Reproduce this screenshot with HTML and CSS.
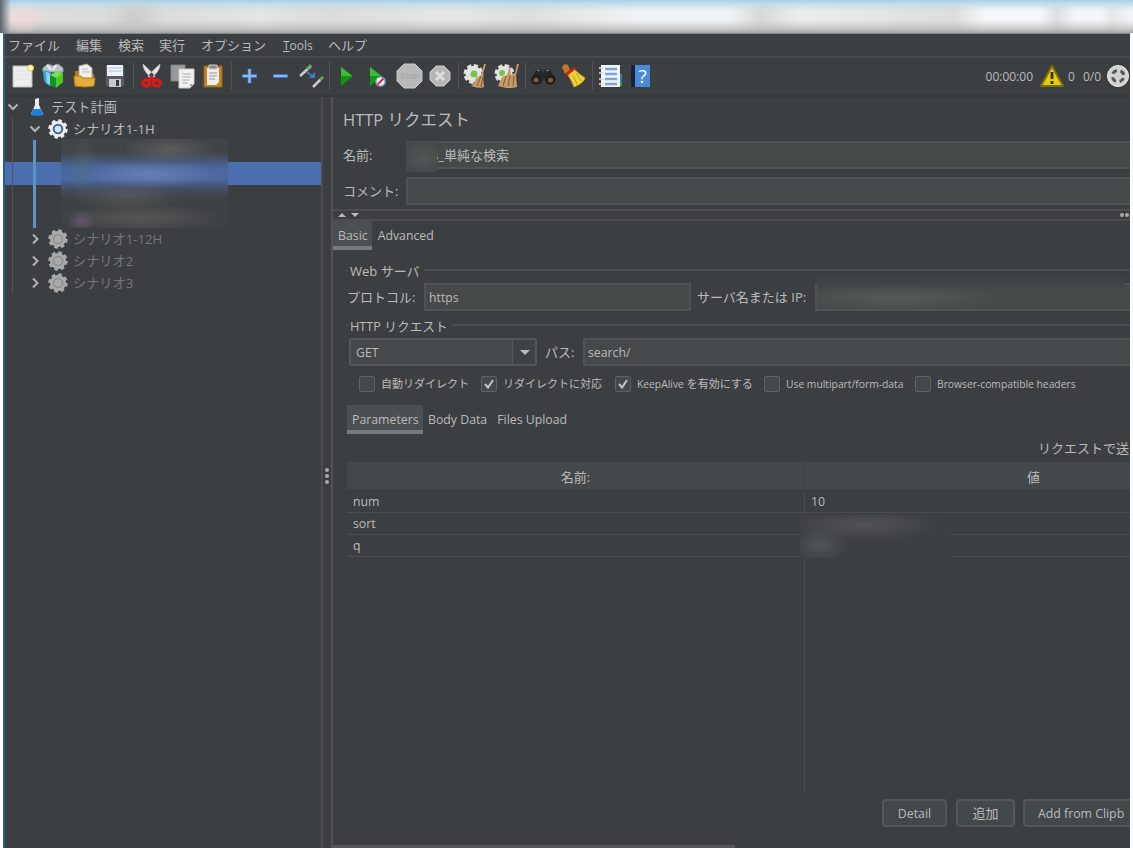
FILE: index.html
```html
<!DOCTYPE html>
<html lang="ja">
<head>
  <meta charset="UTF-8">
  <title>Apache JMeter</title>
  <link rel="stylesheet" href="styles.css">
</head>
<body>
  <div class="titlebar"></div>
  <div class="window">
    <nav class="menubar">
      <span class="m1">ファイル</span><span class="m2">編集</span><span class="m3">検索</span><span class="m4">実行</span><span class="m5">オプション</span><span class="m6"><u>T</u>ools</span><span class="m7">ヘルプ</span>
    </nav>

    <div class="toolbar">
      <svg class="icon" viewBox="0 0 31 28"><path d="M6 4h19v21H6z" fill="#eee" stroke="#bbb"/><path d="M9 9h13M9 13h13M9 17h13" stroke="#e2e2e2"/><circle cx="23.500" cy="6" r="3" fill="#fff6a0" stroke="#e6cf5a"/></svg>
      <svg class="icon" viewBox="0 0 31 28"><path d="M5 6l5-4 5 2 5-2 5 4v4H5z" fill="#b9c6ca" stroke="#8fa2a8"/><path d="M9 3l4 5M18 3l-3 5" stroke="#e9eef0" stroke-width="2"/><path d="M5 9q4-2 8 2v13q-6-2-7-6z" fill="#3ba7cf"/><path d="M8 10q3 0 4 3v10l-3-2z" fill="#8ed6ea"/><path d="M12 13l6 2v11l-6-3z" fill="#159329"/><path d="M18 15l7-4v9l-7 6z" fill="#49cf24"/><path d="M12 13l7-4 6 2-7 5z" fill="#78df54"/></svg>
      <svg class="icon" viewBox="0 0 31 28"><path d="M6 9h6l2 3h11v11H6z" fill="#b6780b"/><path d="M10 4l8-2 5 4v12H10z" fill="#f0f0f0" stroke="#aaa"/><path d="M13 7h6M13 10h8" stroke="#bbb"/><path d="M5 14h7l2 2h12l-1 8q-9 2-19 0z" fill="#e5ad38" stroke="#b67a13"/></svg>
      <svg class="icon" viewBox="0 0 31 28"><path d="M5 3h20v22H7l-2-2z" fill="#555b60" stroke="#30363a"/><path d="M7 3h16v11H7z" fill="#eff5fb"/><path d="M8 6h14M8 9h14" stroke="#a7c0d9"/><path d="M9 17h12v8H9z" fill="#c7c9ca"/><path d="M16 18h3v6h-3z" fill="#33383b"/></svg>
      <i class="sep"></i>
      <svg class="icon" viewBox="0 0 31 28"><path d="M7 2c0 6 4 10 10 15l2-3C15 9 11 6 7 2zM24 2c0 6-4 10-10 15l-2-3C16 9 20 6 24 2z" fill="#e8e8e8" stroke="#bbb" stroke-width=".6"/><g fill="none" stroke="#d01c1c" stroke-width="3.500"><ellipse cx="10.300" cy="21" rx="3.500" ry="3"/><ellipse cx="20.700" cy="21" rx="3.500" ry="3"/></g><path d="M13 18l2.500-3 2.500 3" fill="none" stroke="#d01c1c" stroke-width="3"/></svg>
      <svg class="icon" viewBox="0 0 31 28"><path d="M4 3h14v16H4z" fill="#999" stroke="#808080"/><path d="M12 7h15v15l-4 4H12z" fill="#f1f1f1" stroke="#ccc"/><path d="M15 12h9M15 15h9M15 18h7M15 21h6" stroke="#b0b0b0"/><path d="M23 26v-4h4" fill="#aaa"/></svg>
      <svg class="icon" viewBox="0 0 31 28"><rect x="6" y="4" width="18" height="21" fill="#c78422" stroke="#98600f"/><path d="M9 6h12v14l-3 3H9z" fill="#eee"/><path d="M11 3h8v4h-8z" fill="#888" stroke="#ccc"/><path d="M11 11h8M11 14h8M11 17h6" stroke="#999"/></svg>
      <i class="sep"></i>
      <svg class="icon" viewBox="0 0 31 28"><path d="M15.500 6.500v15M8 14h15" stroke="#315a9e" stroke-width="4.400"/><path d="M15.500 7v14M8.500 14h14" stroke="#8bb9f0" stroke-width="2.400"/></svg>
      <svg class="icon" viewBox="0 0 31 28"><path d="M8 14h15" stroke="#315a9e" stroke-width="4.400"/><path d="M8.500 14h14" stroke="#8bb9f0" stroke-width="2.400"/></svg>
      <svg class="icon" viewBox="0 0 31 28"><path d="M4 14L15 4" stroke="#ccc" stroke-width="2.500"/><path d="M11 7l4-4M23 19l4-4" stroke="#6ba75e" stroke-width="2.500"/><path d="M17 25l7-7" stroke="#ccc" stroke-width="2.500"/><path d="M11 10l6 5" stroke="#3d77c5" stroke-width="2"/><path d="M13 16h6v-6z" fill="#3f7ccc"/></svg>
      <i class="sep"></i>
      <svg class="icon" viewBox="0 0 31 28"><path d="M9 5l12 9-12 10z" fill="#109a12"/><path d="M9 5l11 9H9z" fill="#3fbb38"/></svg>
      <svg class="icon" viewBox="0 0 31 28"><path d="M7 5l12 9L7 24z" fill="#109a12"/><path d="M7 5l11 9H7z" fill="#3fbb38"/><circle cx="17.500" cy="19.500" r="4.600" fill="#eef" stroke="#7b9fcb" stroke-width="1.400"/><path d="M14.500 22.500l6-6" stroke="#db3434" stroke-width="2"/></svg>
      <svg class="icon" viewBox="0 0 31 28"><path d="M10 2h11l7 7v10l-7 7H10l-7-7V9z" fill="#b9b9b9" stroke="#c6c6c6"/><text x="15.500" y="16.500" class="stoptext">STOP</text></svg>
      <svg class="icon" viewBox="0 0 31 28"><path d="M11 4h8l6 6v8l-6 6h-8l-6-6v-8z" fill="#b6b6b6" stroke="#c6c6c6"/><path d="M11 10l8 8M19 10l-8 8" stroke="#dedede" stroke-width="3"/></svg>
      <i class="sep"></i>
      <svg class="icon" viewBox="0 0 31 28"><circle cx="12.500" cy="12" r="8" fill="#e4e4e4" stroke="#e2e2e2" stroke-width="4" stroke-dasharray="4 2.280"/><circle cx="13" cy="12" r="3.500" fill="#74c64e"/><path d="M25 2l-3 10 1 13c-5 2-9 0-13-1 3-2 4-5 5-8l5-3 3-11z" fill="#c69b67"/><path d="M20 14l-4 10M22 15l-2 10" stroke="#815c35"/></svg>
      <svg class="icon" viewBox="0 0 31 28"><circle cx="12.500" cy="12" r="8" fill="#e4e4e4" stroke="#e2e2e2" stroke-width="4" stroke-dasharray="4 2.280"/><circle cx="10" cy="11" r="3" fill="#74c64e"/><path d="M27 2l-3 11 1 12c-7 2-12 1-19-1l4-9 5-2 3-10 1 10 4-2 2-9z" fill="#c69b67"/><path d="M14 14l-3 10M18 14l-2 10M22 14l-1 10" stroke="#815c35"/></svg>
      <i class="sep"></i>
      <svg class="icon" viewBox="0 0 31 28"><path d="M3 17l5-9 5-1 2 4 2-4 5 1 6 9-2 5h-7l-3-6-3 6H5z" fill="#25282a"/><circle cx="8" cy="18" r="3.600" fill="#8a5530" stroke="#181a1b" stroke-width="2"/><circle cx="22.500" cy="18" r="3.600" fill="#8a5530" stroke="#181a1b" stroke-width="2"/><path d="M9 8l3 1M18 9l3-1" stroke="#888"/></svg>
      <svg class="icon" viewBox="0 0 31 28"><path d="M3 5q2-4 6-2l2 5-5 4z" fill="#bd7c24"/><path d="M9 13l6-6q6 6 11 9c-1 4-6 7-11 9q-2-6-6-12z" fill="#f0d338" stroke="#c3a01d"/><path d="M7 13l9-7" stroke="#d71919" stroke-width="2.600"/><path d="M14 13l4 9M17 11l5 8" stroke="#ba9c18"/></svg>
      <i class="sep"></i>
      <svg class="icon" viewBox="0 0 31 28"><path d="M25 12h2v8h-2z" fill="#2f79da"/><path d="M24 20h3v4h-3z" fill="#2fa52d"/><path d="M6 3h19v22H6z" fill="#f2f4f7"/><path d="M10 7h12M10 12h12M10 17h12M10 22h12" stroke="#79a6dc" stroke-width="2.500"/><path d="M4 6h5M4 11h5M4 17h5M4 22h5" stroke="#ddd" stroke-width="1.500"/></svg>
      <svg class="icon" viewBox="0 0 31 28"><path d="M5 3h6v22H5z" fill="#182234"/><path d="M9 3h15v22H9z" fill="#4a8ad8"/><text x="16.500" y="21" class="qmark">?</text></svg>
      <div class="status">
        <span class="time">00:00:00</span>
        <svg class="warn" viewBox="0 0 26 24"><path d="M13 2l11 20H2z" fill="#e8cb0a" stroke="#7d6e12" stroke-width="2" stroke-linejoin="round"/><path d="M13 8v7M13 17v3" stroke="#342e00" stroke-width="2.800"/></svg>
        <span class="errs">0</span><span>0/0</span>
        <svg class="remote" viewBox="0 0 24 24"><circle cx="12" cy="12" r="10.500" fill="#d2d2d2" stroke="#eee"/><circle cx="12" cy="12" r="5.700" fill="none" stroke="#555" stroke-width="3" stroke-dasharray="5 3.950" stroke-dashoffset="-2"/></svg>
      </div>
    </div>

    <div class="workspace">
      <aside class="tree">
        <div class="row root"><svg class="arrow" viewBox="0 0 12 12"><path d="M1.500 3.500L6 8l4.500-4.500"/></svg><svg class="flask" viewBox="0 0 14 20"><path d="M5 2l4-1v7l4 9q-6 2-12 0L5 8z" fill="#e5eef6"/><path d="M3 12h8l2 6q-6 2-12 0z" fill="#207ddc"/></svg><span>テスト計画</span></div>
        <div class="row child"><svg class="arrow" viewBox="0 0 12 12"><path d="M1.500 3.500L6 8l4.500-4.500"/></svg><svg class="gear" viewBox="0 0 20 20"><circle cx="10" cy="10" r="8" fill="#eee" stroke="#eee" stroke-width="3.500" stroke-dasharray="3.400 2.883"/><circle cx="10" cy="10" r="4.300" fill="#d5e4fa" stroke="#4568a0" stroke-width="2"/></svg><span>シナリオ1-1H</span></div>
        <div class="row"></div>
        <div class="row selected"></div>
        <div class="row"></div>
        <div class="row"></div>
        <div class="row child off"><svg class="arrow" viewBox="0 0 12 12"><path d="M4 1.500L8.500 6 4 10.500"/></svg><svg class="gear" viewBox="0 0 20 20"><circle cx="10" cy="10" r="8" fill="#aaa" stroke="#aaa" stroke-width="3.500" stroke-dasharray="3.400 2.883"/><circle cx="10" cy="10" r="4.500" fill="#aaa" stroke="#8f8f8f" stroke-width="1.500"/></svg><span>シナリオ1-12H</span></div>
        <div class="row child off"><svg class="arrow" viewBox="0 0 12 12"><path d="M4 1.500L8.500 6 4 10.500"/></svg><svg class="gear" viewBox="0 0 20 20"><circle cx="10" cy="10" r="8" fill="#aaa" stroke="#aaa" stroke-width="3.500" stroke-dasharray="3.400 2.883"/><circle cx="10" cy="10" r="4.500" fill="#aaa" stroke="#8f8f8f" stroke-width="1.500"/></svg><span>シナリオ2</span></div>
        <div class="row child off"><svg class="arrow" viewBox="0 0 12 12"><path d="M4 1.500L8.500 6 4 10.500"/></svg><svg class="gear" viewBox="0 0 20 20"><circle cx="10" cy="10" r="8" fill="#aaa" stroke="#aaa" stroke-width="3.500" stroke-dasharray="3.400 2.883"/><circle cx="10" cy="10" r="4.500" fill="#aaa" stroke="#8f8f8f" stroke-width="1.500"/></svg><span>シナリオ3</span></div>
        <i class="guide"></i>
        <i class="guide-active"></i>
        <div class="tree-mask"></div>
      </aside>
      <div class="divider"><i></i><i></i><i></i></div>

      <main class="panel">
        <h1>HTTP リクエスト</h1>
        <div class="field-row name-row"><label>名前:</label><div class="input name-input"><span>s_単純な検索</span><i class="name-mask"></i></div></div>
        <div class="field-row comment-row"><label>コメント:</label><div class="input"></div></div>
        <div class="hsplit"><i class="up"></i><i class="down"></i><i class="dot first"></i><i class="dot"></i></div>

        <div class="tabs main-tabs"><span class="tab active">Basic</span><span class="tab">Advanced</span></div>

        <div class="legend web-legend"><span>Web サーバ</span></div>
        <div class="field-row server-row">
          <label class="proto-label">プロトコル:</label><div class="input proto">https</div>
          <label class="server-label">サーバ名または IP:</label><div class="input server"><i class="server-mask"></i></div>
        </div>
        <div class="legend http-legend"><span>HTTP リクエスト</span></div>
        <div class="field-row path-row">
          <div class="select"><span>GET</span><b></b></div>
          <label class="path-label">パス:</label><div class="input path">search/</div>
        </div>
        <div class="checks">
          <span class="check c1"><i class="box"></i>自動リダイレクト</span>
          <span class="check c2"><i class="box"><svg viewBox="0 0 14 14"><path d="M3 7l3 3.500L11 3"/></svg></i>リダイレクトに対応</span>
          <span class="check c3"><i class="box"><svg viewBox="0 0 14 14"><path d="M3 7l3 3.500L11 3"/></svg></i><em>KeepAlive</em>&nbsp;を有効にする</span>
          <span class="check c4"><i class="box"></i><em>Use multipart/form-data</em></span>
          <span class="check c5"><i class="box"></i><em>Browser-compatible headers</em></span>
        </div>

        <div class="tabs sub-tabs"><span class="tab active">Parameters</span><span class="tab">Body Data</span><span class="tab">Files Upload</span></div>
        <div class="table-title">リクエストで送</div>
        <div class="table">
          <div class="tr head"><span>名前:</span><span>値</span></div>
          <div class="tr"><span>num</span><span>10</span></div>
          <div class="tr"><span>sort</span><span></span></div>
          <div class="tr"><span>q</span><span></span></div>
          <div class="tr rest"><span></span><span></span></div>
          <div class="value-mask"></div>
        </div>
        <div class="buttons"><span class="btn detail">Detail</span><span class="btn add">追加</span><span class="btn clip">Add from Clipb</span></div>
        <div class="scrollbar"></div>
      </main>
    </div>
  </div>
</body>
</html>
```
FILE: styles.css
```css
* {
  box-sizing: border-box;
}

body {
  margin: 0;
  width: 1133px;
  height: 848px;
  overflow: hidden;
  background: #fff;
  font-family: "Open Sans", "Noto Sans CJK JP", sans-serif;
  font-size: 12px;
  color: #bbb;
  white-space: nowrap;
}

i, em {
  font-style: normal;
}

svg {
  display: block;
  flex: none;
}

/* title bar is blurred out */
.titlebar {
  height: 33px;
  background:
    linear-gradient(90deg, #5f656c 0, rgba(107, 113, 120, 0) 11px),
    radial-gradient(22px 16px at 24px 18px, rgba(246, 215, 215, .8), transparent),
    radial-gradient(30px 24px at 135px 18px, rgba(190, 190, 190, .5), transparent),
    linear-gradient(#a4d0ea 0, rgba(190, 218, 234, .8) 4px, transparent 11px, transparent 20px, rgba(175, 175, 175, .6) 29px, #a2a2a2 33px),
    linear-gradient(90deg, #dfdfdf 0, #dadada 140px, #e4e4e4 260px, #dcdcdc 330px, #e6e6e6 450px, #dedede 530px, #f2f3f4 640px, #f2f3f4 730px, #d9d9d9 760px, #eceded 800px, #e2e2e2 900px, #dedede 955px, #f6f7f8 985px, #f6f7f8 1040px, #dcdfe0 1057px, #f5f6f7 1075px, #f5f6f7 1100px, #e5e8e9 1112px, #f5f6f7 1133px);
}

.window {
  width: 1127px;
  height: 815px;
  margin-left: 3px;
  overflow: hidden;
  background: #3c3f41;
  border-left: 2px solid #286087;
  border-top: 1px solid #84898a;
}

.menubar {
  display: flex;
  height: 24px;
  padding-left: 3px;
  border-bottom: 2px solid #484b4d;
  font-size: 13px;
  line-height: 23px;
}

.m1 { width: 68px; }
.m2 { width: 42px; }
.m3 { width: 41px; }
.m4 { width: 42px; }
.m5 { width: 82px; }
.m6 { width: 45px; font-size: 12px; }

.toolbar {
  display: flex;
  align-items: center;
  height: 39px;
  padding: 0 0 1px 2px;
  border-bottom: 2px solid #36383a;
}

.icon {
  width: 31px;
  height: 28px;
}

.sep {
  width: 1px;
  height: 28px;
  margin: 0 2px;
  background: #515456;
}

.stoptext {
  font-size: 7px;
  font-weight: bold;
  fill: #a8a8a8;
  text-anchor: middle;
}

.qmark {
  font-size: 19px;
  fill: #fff;
  text-anchor: middle;
}

.status {
  display: flex;
  align-items: center;
  margin-left: auto;
}

.time { margin-left: -2px; }
.warn { width: 26px; height: 24px; margin: 0 3px 0 6px; }
.errs { margin-right: 8px; }
.remote { width: 24px; height: 24px; margin: 0 0 0 5px; }

.workspace {
  display: flex;
  height: 751px;
}

.tree {
  position: relative;
  width: 316px;
  font-size: 13.2px;
}

.row {
  display: flex;
  align-items: center;
  height: 22px;
  padding-bottom: 3px;
}

.root { padding-left: 2px; }
.child { padding-left: 24px; }
.off { color: #777; }

.selected {
  height: 23px;
  margin: -1px 0 0;
  background: #4b6eaf;
}

.arrow {
  width: 12px;
  height: 12px;
  fill: none;
  stroke: #b4b4b4;
  stroke-width: 2;
}

.flask { width: 14px; height: 20px; margin: 0 7px 0 11px; }
.gear { width: 20px; height: 20px; margin: 0 5px 0 7px; }

.guide {
  position: absolute;
  left: 7px;
  top: 21px;
  width: 1px;
  height: 176px;
  background: #525557;
}

.guide-active {
  position: absolute;
  left: 28px;
  top: 43px;
  width: 3px;
  height: 88px;
  background: #5f93c8;
}

.tree-mask {
  position: absolute;
  left: 56px;
  top: 42px;
  width: 167px;
  height: 89px;
  background:
    radial-gradient(14px 11px at 20px 82px, rgba(120, 100, 130, .6), transparent),
    radial-gradient(46px 14px at 108px 11px, rgba(115, 115, 115, .5), transparent),
    radial-gradient(70px 14px at 90px 35px, rgba(130, 150, 200, .5), transparent),
    radial-gradient(14px 34px at 22px 28px, rgba(80, 115, 115, .35), transparent),
    radial-gradient(55px 14px at 65px 57px, rgba(115, 115, 115, .4), transparent),
    radial-gradient(80px 14px at 80px 79px, rgba(105, 105, 105, .5), transparent),
    linear-gradient(#434648 0, #414446 13px, #4a679e 29px, #4b68a0 40px, #41495a 52px, #3f4244 60px, #3f4244 89px);
}

.divider {
  display: flex;
  flex-direction: column;
  align-items: center;
  gap: 2px;
  width: 12px;
  padding-top: 371px;
  border-left: 2px solid #4a4c4e;
  border-right: 2px solid #515355;
}

.divider i {
  width: 4px;
  height: 4px;
  border-radius: 2px;
  background: #aaa;
}

.panel {
  display: flex;
  flex-direction: column;
  width: 797px;
  overflow: hidden;
  font-size: 12.3px;
}

h1 {
  height: 44px;
  margin: 0;
  padding-left: 10px;
  font-size: 16.5px;
  font-weight: normal;
  line-height: 46px;
}

.field-row {
  display: flex;
  flex: none;
  height: 28px;
  line-height: 29px;
}

label, .legend {
  font-size: 13px;
}

.input {
  flex: 1;
  height: 28px;
  padding-left: 3px;
  background: #45494a;
  border: 2px solid #505355;
  border-right: 0;
  line-height: 25px;
}

.name-row label, .comment-row label {
  width: 73px;
  padding-left: 10px;
}

.comment-row { margin-top: 8px; }

.name-input {
  position: relative;
  padding-left: 24px;
  font-size: 13px;
}

.name-mask {
  position: absolute;
  left: -2px;
  top: -1px;
  width: 31px;
  height: 30px;
  background: radial-gradient(20px 16px at 17px 16px, #535657, #45494a);
}

.hsplit {
  display: flex;
  flex: none;
  align-items: center;
  height: 12px;
  margin-top: 4px;
  padding: 0 1px 0 5px;
  border-top: 2px solid #4a4c4e;
  border-bottom: 2px solid #4a4c4e;
}

.up, .down {
  border: 4px solid transparent;
}

.up {
  margin-right: 5px;
  border-top: 0;
  border-bottom: 4px solid #bbb;
}

.down {
  border-bottom: 0;
  border-top: 4px solid #bbb;
}

.dot {
  width: 4px;
  height: 4px;
  border-radius: 2px;
  background: #aaa;
}

.first { margin: 0 1px 0 auto; }

.tabs {
  display: flex;
  flex: none;
  height: 29px;
  line-height: 29px;
}

.tab {
  padding: 0 5px;
}

.active {
  background: #4b4f51;
  border-bottom: 4px solid #757a83;
}

.main-tabs { line-height: 30px; }
.main-tabs .tab { padding-left: 6px; }
.main-tabs .active { padding: 0 4px 0 5px; }

.legend {
  display: flex;
  flex: none;
  align-items: center;
  height: 20px;
  margin-left: 13px;
}

.legend::before {
  content: "";
  width: 2px;
  height: 1px;
  margin-right: 2px;
  background: #55585a;
}

.legend::after {
  content: "";
  flex: 1;
  height: 2px;
  margin-left: 4px;
  background: #4a4d4f;
}

.web-legend { margin-top: 10px; }

.server-row {
  margin-top: 3px;
}

.proto-label { width: 91px; padding-left: 14px; }
.proto { flex: none; width: 267px; border-right: 2px solid #505355; }
.server-label { width: 124px; padding-left: 6px; }

.server {
  position: relative;
}

.server-mask {
  position: absolute;
  left: 0;
  top: -9px;
  width: 308px;
  height: 33px;
  background:
    radial-gradient(110px 13px at 80px 22px, rgba(95, 98, 99, .7), transparent),
    linear-gradient(#3e4143, #45494a 14px);
}

.http-legend {
  margin-top: 4px;
  font-size: 12.7px;
}

.path-row {
  margin-top: 3px;
}

.select {
  display: flex;
  width: 188px;
  margin-left: 16px;
  background: #45494a;
  border: 2px solid #55585a;
  border-radius: 2px;
  line-height: 25px;
}

.select span {
  width: 162px;
  padding-left: 5px;
  border-right: 1px solid #55585a;
}

.select b {
  width: 22px;
  flex: none;
  background: #3f4244;
}

.select b::before {
  content: "";
  display: block;
  margin: 10px 0 0 7px;
  width: 0;
  border: 5px solid transparent;
  border-top: 5px solid #bbb;
  border-bottom: 0;
}

.path-label { width: 46px; padding-left: 8px; }

.checks {
  display: flex;
  flex: none;
  height: 16px;
  margin: 10px 0 0 26px;
  font-size: 11px;
  line-height: 16px;
}

.check {
  display: flex;
}

.check em { font-size: 10.3px; }

.box {
  width: 16px;
  height: 16px;
  margin-right: 6px;
  background: #43494a;
  border: 1px solid #5f6364;
  border-radius: 2px;
}

.box svg {
  width: 14px;
  height: 14px;
  fill: none;
  stroke: #c5c5c5;
  stroke-width: 2;
}

.c1 { width: 122px; }
.c2 { width: 134px; }
.c3 { width: 149px; }
.c4 { width: 151px; }

.sub-tabs {
  margin: 13px 0 0 14px;
}

.sub-tabs .active {
  width: 76px;
}

.table-title {
  height: 28px;
  padding-left: 705px;
  font-size: 13px;
  line-height: 28px;
}

.table {
  position: relative;
  margin-left: 14px;
}

.tr {
  display: flex;
  height: 22px;
  line-height: 21px;
}

.tr span {
  flex: 1;
  padding-left: 6px;
  border-bottom: 1px solid #4b4e50;
}

.tr span:first-child {
  flex: none;
  width: 458px;
  border-right: 1px solid #4b4e50;
}

.head {
  height: 28px;
  margin-bottom: 1px;
  background: #45484a;
  font-size: 13px;
  line-height: 30px;
}

.head span, .head span:first-child {
  padding: 0;
  border-color: #3d4042;
  text-align: center;
}

/* the value column runs past the window edge */
.head span:last-child { padding-left: 132px; }

.rest { height: 236px; }
.rest span { border-bottom: 0; }

.value-mask {
  position: absolute;
  left: 453px;
  top: 53px;
  width: 150px;
  height: 43px;
  background:
    radial-gradient(75px 16px at 65px 10px, #505254, transparent),
    radial-gradient(28px 18px at 20px 30px, #505456, transparent),
    #3d4042;
}

.buttons {
  display: flex;
  flex: none;
  height: 28px;
  margin: 6px 0 0 549px;
}

.btn {
  flex: none;
  height: 28px;
  border: 2px solid #54585a;
  border-radius: 4px;
  background: #43484a;
  line-height: 25px;
  text-align: center;
}

.detail { width: 65px; margin-right: 9px; }
.add { width: 59px; margin-right: 8px; font-size: 13px; }
.clip { width: 160px; padding-left: 13px; text-align: left; }

.scrollbar {
  flex: none;
  width: 402px;
  height: 4px;
  margin-top: 18px;
  background: #555759;
}
```
